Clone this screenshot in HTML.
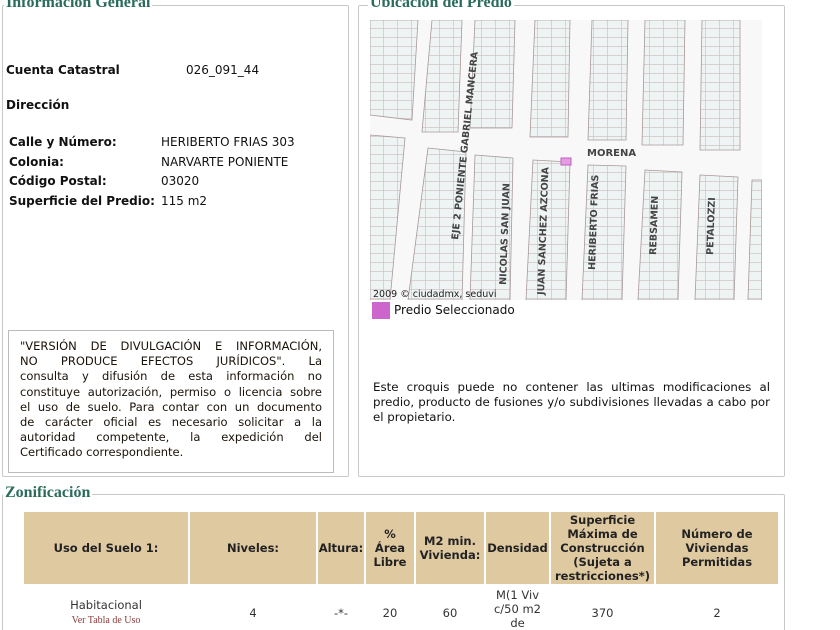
<!DOCTYPE html>
<html><head><meta charset="utf-8"><style>
*{margin:0;padding:0;box-sizing:border-box}
html{width:840px;height:630px;overflow:hidden}
body{width:840px;height:630px;overflow:hidden;background:#fff;font-family:"DejaVu Sans",Verdana,sans-serif;font-size:11.5px;color:#111;position:relative}
.fs{position:absolute;border:1px solid #c8c8c8;border-radius:2px}
.lg{position:absolute;background:#fff;font-family:"Liberation Serif",serif;font-weight:bold;font-size:16px;color:#2a6b5c;padding:0 2px;line-height:18px}
.a{position:absolute;white-space:nowrap}
.b{font-weight:bold}
.disc{position:absolute;left:8px;top:330px;width:326px;height:143px;border:1px solid #bbb;padding:8px 11px 0 11px;font-size:11.5px;line-height:15.2px;color:#1a1208}
.disc span{display:block;text-align:justify;text-align-last:justify;white-space:nowrap}
.disc span.l{text-align-last:left}
table{position:absolute;left:22px;top:512px;width:758px;table-layout:fixed;border-collapse:separate;border-spacing:2px 0;font-size:11.5px}
th{background:#dfc9a1;height:72px;font-weight:bold;color:#222;text-align:center;line-height:14px;padding:0}
td{text-align:center;color:#333;height:58px;padding:0;line-height:14px}
</style></head><body>
<div class="fs" style="left:2px;top:5px;width:347px;height:472px"></div>
<div class="lg" style="left:4px;top:-6px">Información General</div>
<div class="fs" style="left:358px;top:5px;width:427px;height:472px"></div>
<div class="lg" style="left:368px;top:-6px">Ubicación del Predio</div>
<div class="fs" style="left:2px;top:494px;width:783px;height:160px"></div>
<div class="lg" style="left:3px;top:484px">Zonificación</div>

<div class="a b" style="left:6px;top:63px;font-size:12px">Cuenta Catastral</div>
<div class="a" style="left:186px;top:63px;font-size:12px">026_091_44</div>
<div class="a b" style="left:6px;top:98px;font-size:12px">Dirección</div>
<div class="a b" style="left:9px;top:133px;line-height:19.5px;font-size:12px">Calle y Número:<br>Colonia:<br>Código Postal:<br>Superficie del Predio:</div>
<div class="a" style="left:161px;top:133px;line-height:19.5px;font-size:12px">HERIBERTO FRIAS 303<br>NARVARTE PONIENTE<br>03020<br>115 m2</div>

<div class="disc">
<span>"VERSIÓN DE DIVULGACIÓN E INFORMACIÓN,</span>
<span>NO PRODUCE EFECTOS JURÍDICOS". La</span>
<span>consulta y difusión de esta información no</span>
<span>constituye autorización, permiso o licencia sobre</span>
<span>el uso de suelo. Para contar con un documento</span>
<span>de carácter oficial es necesario solicitar a la</span>
<span>autoridad competente, la expedición del</span>
<span class="l">Certificado correspondiente.</span>
</div>

<svg class="a" style="left:370px;top:20px" width="392" height="280" viewBox="0 0 392 280">
<defs><pattern id="p" width="14" height="9" patternUnits="userSpaceOnUse"><rect width="14" height="9" fill="#eef4f4"/><path d="M0 8.5H14M13.5 0V9" stroke="#d2c4c4" stroke-width="0.7"/></pattern></defs>
<rect width="392" height="280" fill="#f8f8f8"/>
<g fill="url(#p)" stroke="#a89898" stroke-width="0.8">
<polygon points="0,0 48,0 42,100 0,95"/>
<polygon points="62,0 92,0 88,112 52,112"/>
<polygon points="105,0 145,0 142,108 100,108"/>
<polygon points="165,0 200,0 198,117 160,117"/>
<polygon points="222,0 258,0 256,120 218,120"/>
<polygon points="275,0 315,0 313,125 272,125"/>
<polygon points="332,0 370,0 370,130 330,130"/>
<polygon points="0,115 35,118 20,280 0,280"/>
<polygon points="58,128 96,132 92,280 38,280"/>
<polygon points="105,135 143,138 140,280 100,280"/>
<polygon points="163,140 200,142 196,280 156,280"/>
<polygon points="218,145 256,146 252,280 212,280"/>
<polygon points="275,150 312,152 308,280 268,280"/>
<polygon points="330,155 368,157 364,280 325,280"/>
<polygon points="382,160 392,160 392,280 378,280"/>
</g>
<rect x="191" y="138" width="10" height="7" fill="#e49de0" stroke="#c060c0"/>
<g font-family="DejaVu Sans,sans-serif" font-size="9.5" font-weight="bold" fill="#444">
<text x="217" y="136" font-size="10">MORENA</text>
<text transform="translate(88,220) rotate(-84)">EJE 2 PONIENTE GABRIEL MANCERA</text>
<text transform="translate(136,265) rotate(-88)">NICOLAS SAN JUAN</text>
<text transform="translate(174,275) rotate(-88)">JUAN SANCHEZ AZCONA</text>
<text transform="translate(225,250) rotate(-88)">HERIBERTO FRIAS</text>
<text transform="translate(286,235) rotate(-88)">REBSAMEN</text>
<text transform="translate(343,235) rotate(-88)">PETALOZZI</text>
<text transform="translate(400,240) rotate(-88)">PITAGORAS</text>
<text x="3" y="277" font-size="9.5" font-weight="normal" fill="#222">2009 © ciudadmx, seduvi</text>
</g>
</svg>
<div class="a" style="left:372px;top:302px;width:18px;height:17px;background:#cc66cc"></div>
<div class="a" style="left:394px;top:303px;font-size:12px">Predio Seleccionado</div>

<div class="a" style="left:373px;top:380px;width:397px;font-size:11.8px;line-height:15px;text-align:justify;white-space:normal">Este croquis puede no contener las ultimas modificaciones al predio, producto de fusiones y/o subdivisiones llevadas a cabo por el propietario.</div>

<table><colgroup><col style="width:164px"><col style="width:126px"><col style="width:46px"><col style="width:48px"><col style="width:68px"><col style="width:63px"><col style="width:103px"><col style="width:122px"></colgroup><tr>
<th>Uso del Suelo 1:</th>
<th>Niveles:</th>
<th>Altura:</th>
<th>%<br>Área<br>Libre</th>
<th>M2 min.<br>Vivienda:</th>
<th>Densidad</th>
<th>Superficie<br>Máxima de<br>Construcción<br>(Sujeta a<br>restricciones*)</th>
<th>Número de<br>Viviendas<br>Permitidas</th>
</tr><tr>
<td>Habitacional<br><span style="font-family:'Liberation Serif',serif;font-size:10px;color:#8a3a3a">Ver Tabla de Uso</span></td>
<td>4</td><td>-*-</td><td>20</td><td>60</td>
<td style="vertical-align:top;padding-top:4px">M(1 Viv<br>c/50 m2<br>de</td>
<td>370</td><td>2</td>
</tr></table>
</body></html>
